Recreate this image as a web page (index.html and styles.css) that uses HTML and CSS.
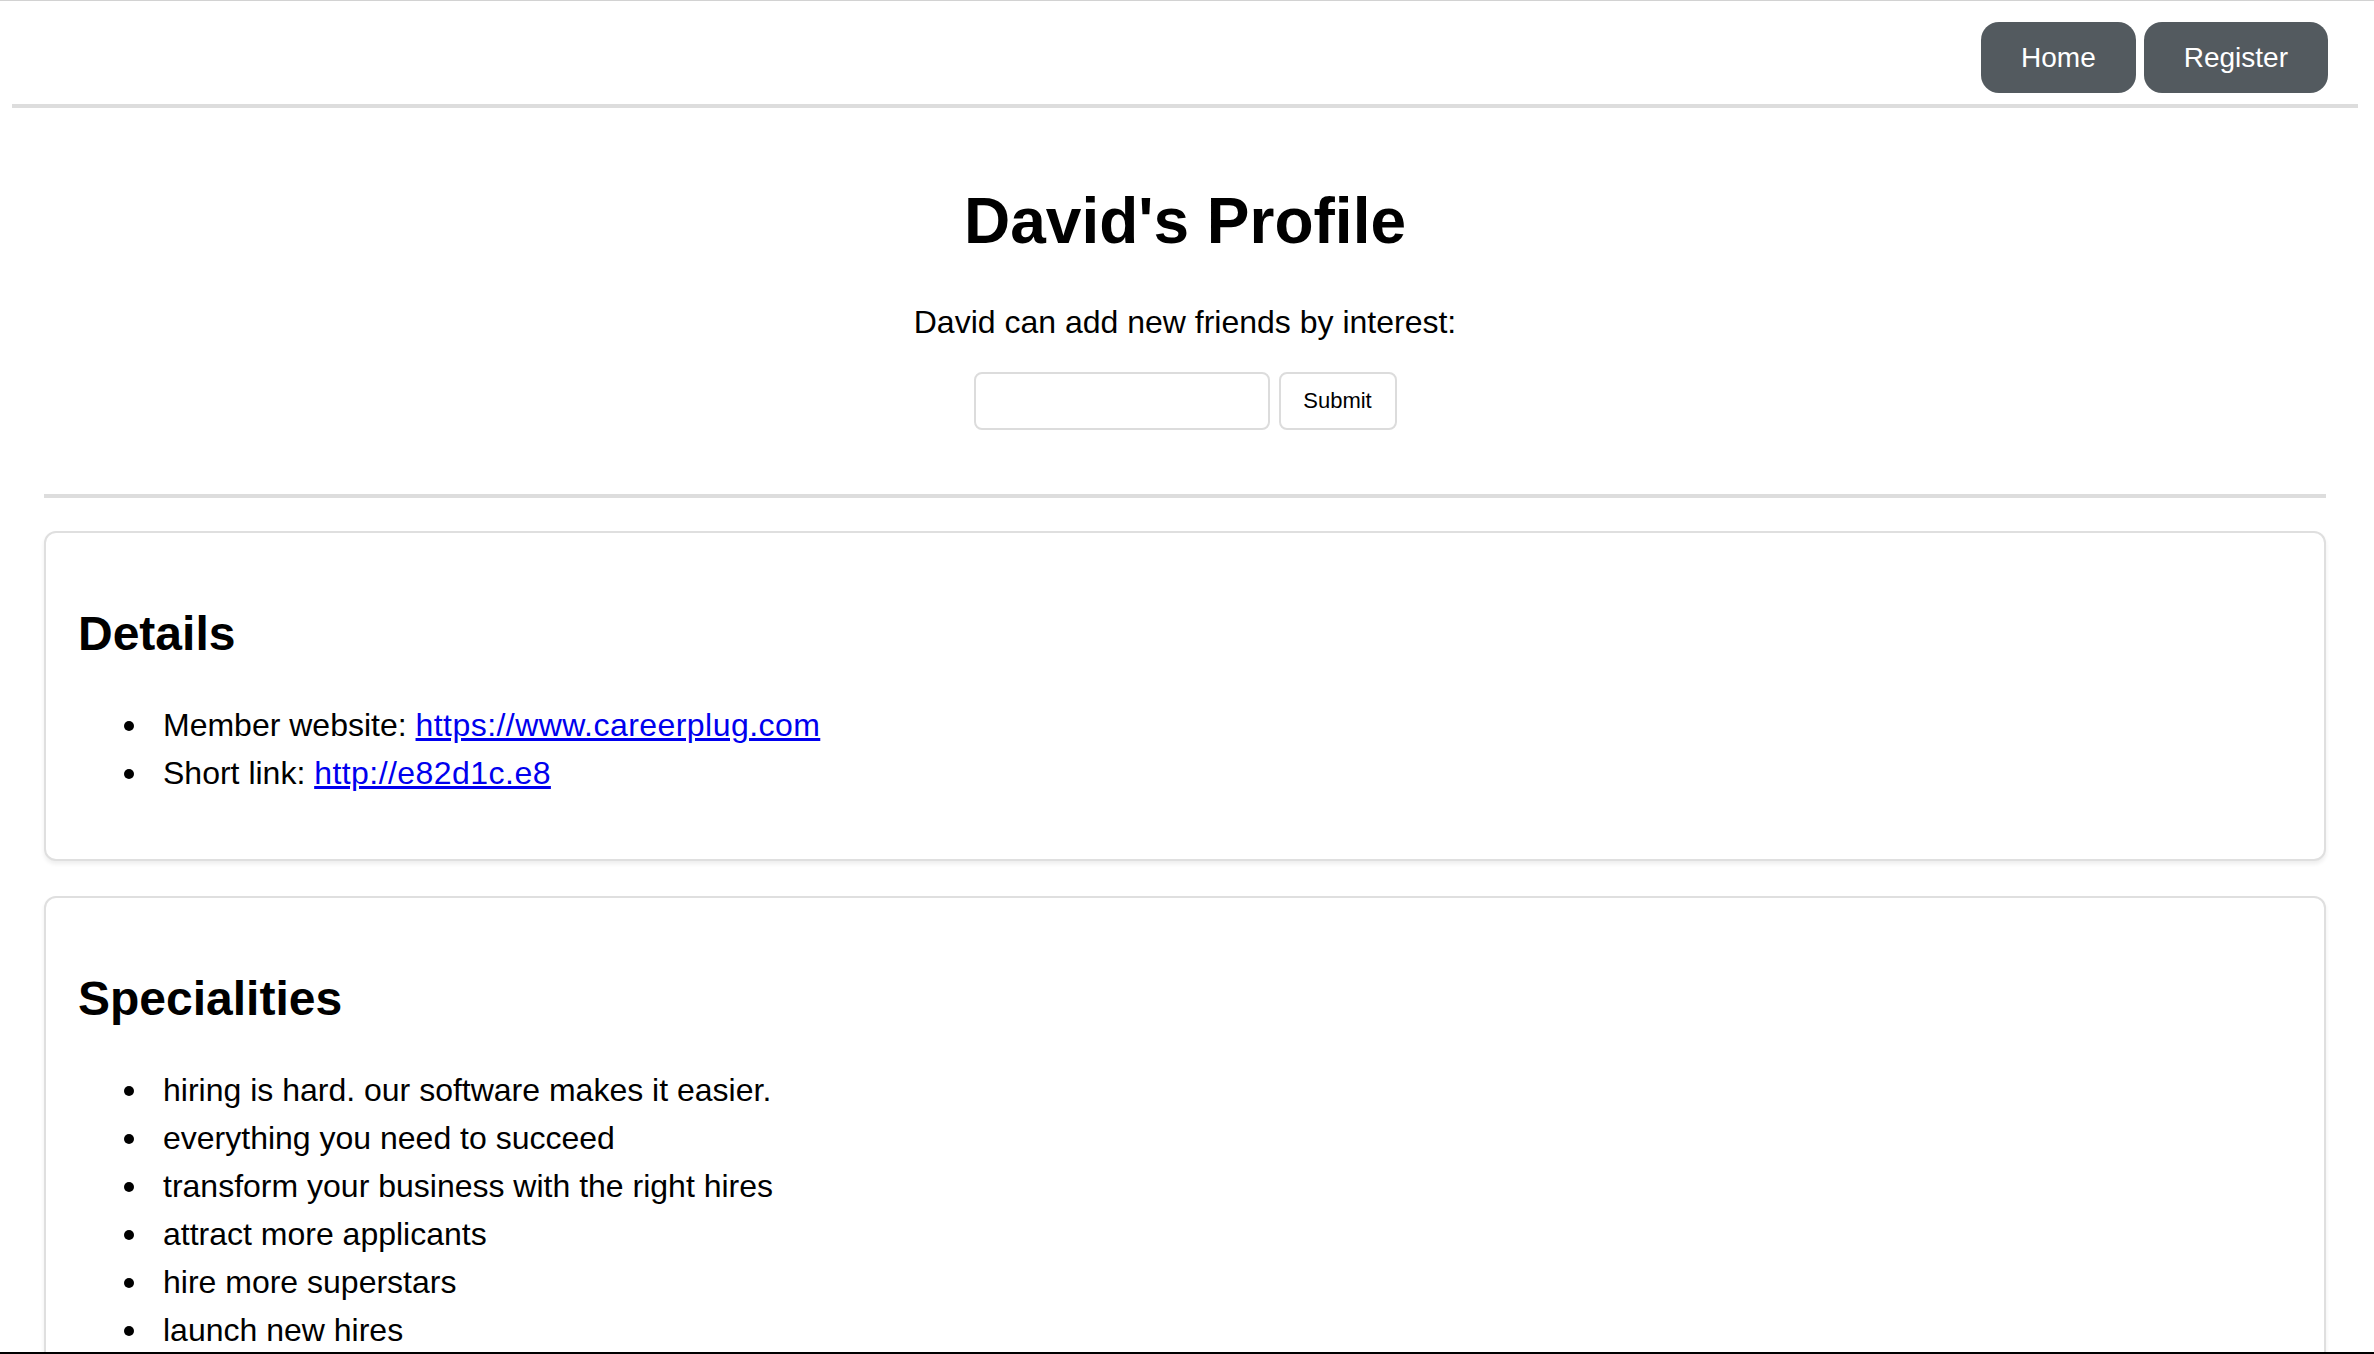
FILE: index.html
```html
<!DOCTYPE html>
<html lang="en">
<head>
<meta charset="utf-8">
<title>David's Profile</title>
<link rel="stylesheet" href="styles.css">
</head>
<body>
<nav class="topnav">
  <a class="nav-btn" href="#">Home</a>
  <a class="nav-btn" href="#">Register</a>
</nav>
<main class="content">
  <h1 class="title">David's Profile</h1>
  <p class="lead">David can add new friends by interest:</p>
  <form class="interest-form">
    <input class="interest-input" type="text">
    <button class="submit-btn" type="button">Submit</button>
  </form>
  <hr class="divider">
  <section class="card">
    <h2 class="card-title">Details</h2>
    <ul class="card-list">
      <li>Member website: <a class="link" href="#">https://www.careerplug.com</a></li>
      <li>Short link: <a class="link" href="#">http://e82d1c.e8</a></li>
    </ul>
  </section>
  <section class="card">
    <h2 class="card-title">Specialities</h2>
    <ul class="card-list">
      <li>hiring is hard. our software makes it easier.</li>
      <li>everything you need to succeed</li>
      <li>transform your business with the right hires</li>
      <li>attract more applicants</li>
      <li>hire more superstars</li>
      <li>launch new hires</li>
    </ul>
  </section>
</main>
<div class="window-edge"></div>
</body>
</html>
```
FILE: styles.css
```css
html {
  border-top: 1px solid #d2d2d2;
}
body {
  margin: 0;
  font-family: "Liberation Sans", Arial, Helvetica, sans-serif;
  font-size: 32px;
  color: #000;
  background: #fff;
}
.topnav {
  display: flex;
  justify-content: flex-end;
  gap: 8px;
  margin: 0 16px 0 12px;
  padding: 21px 30px 11px 0;
  border-bottom: 4px solid #dddddd;
}
.nav-btn {
  display: flex;
  align-items: center;
  height: 71px;
  padding: 0 40px;
  box-sizing: border-box;
  background: #535a5f;
  color: #fff;
  border-radius: 18px;
  font-size: 28px;
  text-decoration: none;
}
.content {
  margin: 0 48px 0 44px;
  padding-top: 36px;
}
.title {
  text-align: center;
  font-size: 64px;
  font-weight: bold;
  margin: 40px 0 46px;
}
.lead {
  text-align: center;
  margin: 32px 0 31px;
}
.interest-form {
  display: flex;
  justify-content: center;
  gap: 9px;
  margin: 0;
}
.interest-input {
  width: 296px;
  height: 58px;
  box-sizing: border-box;
  border: 2px solid #dcdcdc;
  border-radius: 8px;
  background: #fff;
  margin: 0;
}
.submit-btn {
  width: 118px;
  height: 58px;
  box-sizing: border-box;
  border: 2px solid #dcdcdc;
  border-radius: 8px;
  background: #fff;
  color: #000;
  font-family: "Liberation Sans", Arial, sans-serif;
  font-size: 22px;
  margin: 0;
  padding: 0;
}
.divider {
  border: 0;
  height: 4px;
  background: #dddddd;
  margin: 64px 0 33px;
}
.card {
  border: 2px solid #dfdfdf;
  border-radius: 12px;
  padding: 33px 32px 30px;
  margin-bottom: 35px;
  box-shadow: 0 3px 4px rgba(0, 0, 0, 0.07);
  background: #fff;
}
.card-title {
  font-size: 48px;
  font-weight: bold;
  margin: 40px 0;
}
.card-list {
  margin: 32px 0;
  padding-left: 85px;
  line-height: 48px;
  list-style: none;
}
.card-list li::before {
  content: "";
  display: inline-block;
  width: 10px;
  height: 10px;
  border-radius: 50%;
  background: #000;
  margin-left: -39px;
  margin-right: 29px;
  vertical-align: 5px;
}
.link {
  color: #0000ee;
  text-decoration: underline;
  letter-spacing: 0.45px;
}
.window-edge {
  position: fixed;
  left: 0;
  right: 0;
  bottom: 0;
  height: 2px;
  background: #000;
}
```
